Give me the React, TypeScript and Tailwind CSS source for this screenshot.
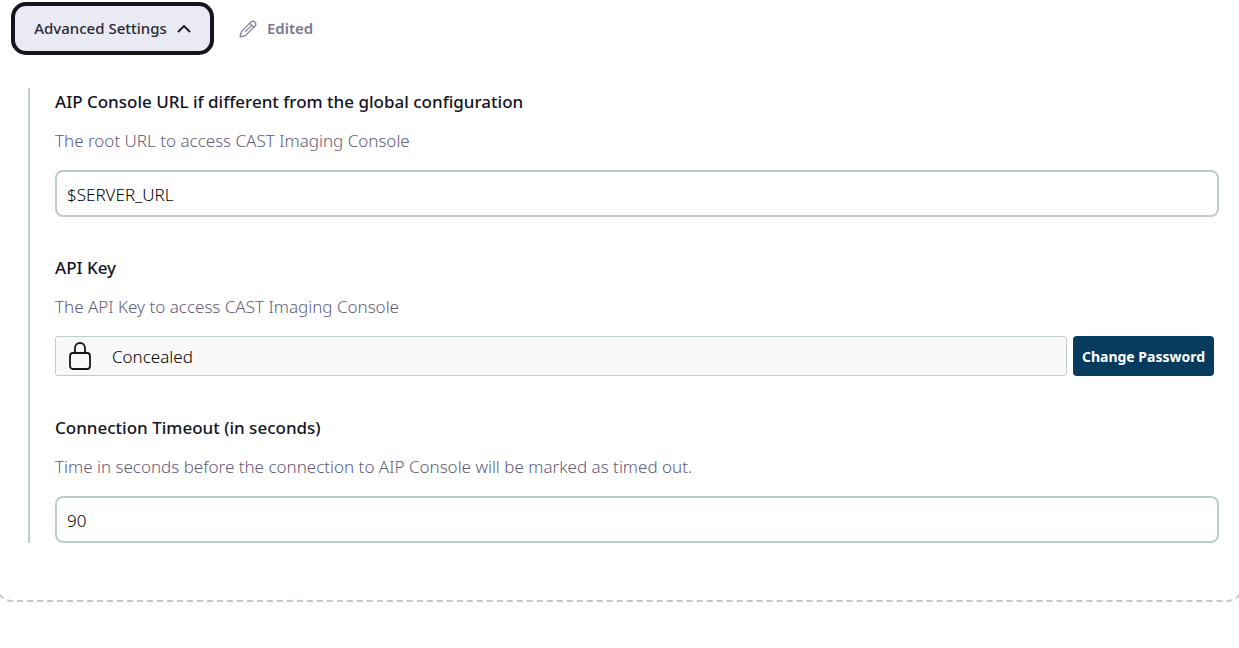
import React, { useState } from "react";

type FieldProps = {
  id: string;
  label: string;
  description: string;
  children: React.ReactNode;
};

function Field({ id, label, description, children }: FieldProps) {
  return (
    <div>
      <label htmlFor={id} className="block text-[17px] leading-7 font-medium text-[#15141f]">
        {label}
      </label>
      <p id={`${id}-hint`} className="mt-3 mb-4 text-[17px] leading-[26px] font-light text-[#5f5c78]">
        {description}
      </p>
      {children}
    </div>
  );
}

type TextInputProps = { id: string; initial: string };

function TextInput({ id, initial }: TextInputProps) {
  const [value, setValue] = useState(initial);
  return (
    <input
      id={id}
      type="text"
      aria-describedby={`${id}-hint`}
      value={value}
      onChange={(e) => setValue(e.target.value)}
      className="block h-[47px] w-full rounded-lg border-2 border-[#bfcbcf] bg-white px-2.5 pt-0.5 text-[17px] font-light text-black"
    />
  );
}

function PencilIcon() {
  return (
    <svg viewBox="0 0 18 18" className="size-[18px]" fill="none" stroke="currentColor" strokeWidth="1.2" strokeLinejoin="round" strokeLinecap="round" aria-hidden="true">
      <path d="M1 17l1.4-5.4L12.3 1.7a2.1 2.1 0 0 1 3 0l1 1a2.1 2.1 0 0 1 0 3L6.4 15.6z" />
      <path d="M10.8 3.4l3.8 3.8M12.7 5.3L6.6 11.4" />
    </svg>
  );
}

function LockIcon() {
  return (
    <svg viewBox="0 0 24 30" className="h-[30px] w-6 shrink-0" fill="none" stroke="currentColor" strokeWidth="1.8" aria-hidden="true">
      <rect x="2" y="12" width="20" height="16" rx="3" />
      <path d="M7 12V7a5 5 0 0 1 10 0V12" />
    </svg>
  );
}

export default function App() {
  return (
    <main className="overflow-hidden bg-white font-['Noto_Sans','Open_Sans',sans-serif]">
      <section className="-mx-1 rounded-b-2xl border-2 border-t-0 border-dashed border-[#bfcbcf] pt-0.5 pr-[22px] pb-[57px] pl-[13px]">
        <div className="flex items-center">
          <button
            type="button"
            aria-expanded="true"
            className="flex h-[53px] w-[203px] items-center justify-center gap-2.5 rounded-[15px] border-4 border-[#15141f] bg-[#eaeaf4] text-[15px] font-medium text-[#2a2933]"
          >
            Advanced Settings
            <svg viewBox="0 0 14 10" className="h-2.5 w-3.5" fill="none" stroke="#15141f" strokeWidth="1.8" aria-hidden="true">
              <path d="M1 8l6-6 6 6" />
            </svg>
          </button>
          <span className="ml-[25px] flex items-center gap-2.5 text-[15px] font-semibold text-[#7b7890]">
            <PencilIcon />
            Edited
          </span>
        </div>

        <div className="mt-[33px] ml-[17px] flex flex-col gap-[37px] border-l-2 border-[#bfcbcf] pl-[25px]">
          <Field
            id="console-url"
            label="AIP Console URL if different from the global configuration"
            description="The root URL to access CAST Imaging Console"
          >
            <TextInput id="console-url" initial="$SERVER_URL" />
          </Field>

          <Field id="api-key" label="API Key" description="The API Key to access CAST Imaging Console">
            <div className="flex gap-1.5 pr-[5px] pb-px">
              <div className="flex h-10 flex-1 items-center gap-5 rounded-[3px] border border-[#bfcbcf] bg-[#f9f9f9] pl-3 text-[#15141f]">
                <LockIcon />
                <input
                  id="api-key"
                  type="text"
                  readOnly
                  value="Concealed"
                  aria-describedby="api-key-hint"
                  className="min-w-0 flex-1 bg-transparent pt-0.5 text-[17px] font-light text-black"
                />
              </div>
              <button type="button" className="h-10 w-[141px] rounded bg-[#073b5e] text-[14px] font-bold whitespace-nowrap text-white">
                Change Password
              </button>
            </div>
          </Field>

          <Field
            id="timeout"
            label="Connection Timeout (in seconds)"
            description="Time in seconds before the connection to AIP Console will be marked as timed out."
          >
            <TextInput id="timeout" initial="90" />
          </Field>
        </div>
      </section>
    </main>
  );
}
